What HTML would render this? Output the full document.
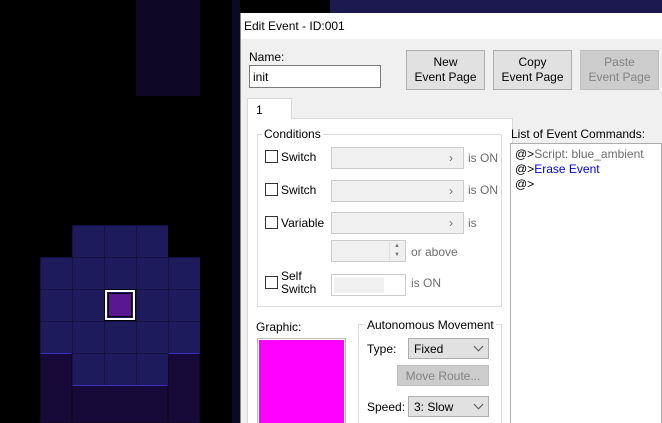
<!DOCTYPE html><html><head><style>
*{box-sizing:border-box;margin:0;padding:0}
html,body{width:662px;height:423px;overflow:hidden}
body{background:#000;position:relative;font-family:"Liberation Sans",sans-serif;font-size:12px;color:#000}
.a{position:absolute}
.t{background:#1e1b5c;background-image:linear-gradient(#15123f 1px,transparent 1px),linear-gradient(90deg,#15123f 1px,transparent 1px);background-size:32px 32px}
.d{background:#170a38;border:1px solid #110828}
.btn{position:absolute;background:#e1e1e1;border:1px solid #adadad;text-align:center;line-height:15px;padding-top:4px}
.cb{position:absolute;width:13px;height:13px;border:1px solid #333;background:#fff}
.combo{position:absolute;background:#f0f0f0;border:1px solid #ccc}
.g{color:#6d6d6d}
.sel{position:absolute;background:#e1e1e1;border:1px solid #adadad;padding:3px 0 0 5px}
.chev{position:absolute;right:6px;top:4px;width:7px;height:7px;border-right:1px solid #555;border-bottom:1px solid #555;transform:rotate(45deg)}
</style></head><body>
<div class="a d" style="left:136px;top:0;width:64px;height:96px;background:#0e0826"></div>
<div class="a t" style="left:72px;top:225px;width:96px;height:32px"></div>
<div class="a t" style="left:40px;top:257px;width:160px;height:96px"></div>
<div class="a t" style="left:72px;top:353px;width:96px;height:32px"></div>
<div class="a d" style="left:40px;top:353px;width:32px;height:70px;border-top:1px solid #3a30c0"></div>
<div class="a d" style="left:168px;top:353px;width:32px;height:70px;border-top:1px solid #3a30c0"></div>
<div class="a d" style="left:72px;top:385px;width:96px;height:38px;border-top:1px solid #3a30c0"></div>
<div class="a" style="left:105px;top:290px;width:30px;height:30px;border:2px solid #fff;outline:1px solid #000"><div style="margin:1px;height:24px;border:1px solid #000;background:#5a1890"></div></div>
<div class="a" style="left:330px;top:0;width:332px;height:13px;background:#1c1850"></div>
<div class="a" style="left:232px;top:0;width:8px;height:423px;background:#0c0a22"></div>
<div class="a" style="left:240px;top:13px;width:422px;height:410px;background:#f0f0f0;border-left:1px solid #888">
<div style="height:26px;background:#fff;padding:6px 0 0 3px;font-size:12px">Edit Event - ID:001</div>
</div>
<div class="a" style="left:249px;top:50px">Name:</div>
<div class="a" style="left:249px;top:65px;width:132px;height:23px;border:1px solid #7a7a7a;background:#fff;padding:4px 3px">init</div>
<div class="btn" style="left:406px;top:50px;width:79px;height:40px">New<br>Event Page</div>
<div class="btn" style="left:493px;top:50px;width:79px;height:40px">Copy<br>Event Page</div>
<div class="btn" style="left:580px;top:50px;width:79px;height:40px;background:#ccc;border-color:#bfbfbf;color:#838383">Paste<br>Event Page</div>
<div class="a" style="left:247px;top:118px;width:266px;height:305px;background:#fff;border:1px solid #d9d9d9;border-bottom:none"></div>
<div class="a" style="left:247px;top:98px;width:45px;height:21px;background:#fff;border:1px solid #d9d9d9;border-bottom:none;padding:4px 8px">1</div>
<div class="a" style="left:257px;top:134px;width:245px;height:173px;border:1px solid #dcdcdc"></div>
<div class="a" style="left:262px;top:127px;background:#fff;padding:0 2px">Conditions</div>
<div class="cb" style="left:265px;top:150px"></div><div class="a" style="left:281px;top:150px">Switch</div>
<div class="combo" style="left:331px;top:147px;width:133px;height:22px"></div><div class="a g" style="left:449px;top:151px">›</div><div class="a g" style="left:468px;top:151px">is ON</div>
<div class="cb" style="left:265px;top:183px"></div><div class="a" style="left:281px;top:183px">Switch</div>
<div class="combo" style="left:331px;top:180px;width:133px;height:22px"></div><div class="a g" style="left:449px;top:184px">›</div><div class="a g" style="left:468px;top:183px">is ON</div>
<div class="cb" style="left:265px;top:216px"></div><div class="a" style="left:281px;top:216px">Variable</div>
<div class="combo" style="left:331px;top:212px;width:133px;height:22px"></div><div class="a g" style="left:449px;top:216px">›</div><div class="a g" style="left:468px;top:216px">is</div>
<div class="combo" style="left:331px;top:240px;width:75px;height:22px"><div style="position:absolute;right:1px;top:1px;width:15px;height:18px;border-left:1px solid #ddd;font-size:6px;line-height:9px;text-align:center;color:#777">▲<br>▼</div></div><div class="a g" style="left:411px;top:245px">or above</div>
<div class="cb" style="left:265px;top:276px"></div><div class="a" style="left:281px;top:270px;line-height:13px">Self<br>Switch</div>
<div class="combo" style="left:331px;top:274px;width:75px;height:22px;background:#fff"><div style="margin:2px;width:50px;height:16px;background:#f0f0f0"></div></div><div class="a g" style="left:411px;top:276px">is ON</div>
<div class="a" style="left:256px;top:320px">Graphic:</div>
<div class="a" style="left:257px;top:338px;width:89px;height:85px;border:1px solid #bbb;border-bottom:none;padding:1px 1px 0"><div style="background:#f0f;height:100%"></div></div>
<div class="a" style="left:358px;top:324px;width:144px;height:99px;border:1px solid #dcdcdc;border-bottom:none"></div>
<div class="a" style="left:365px;top:318px;background:#fff;padding:0 2px">Autonomous Movement</div>
<div class="a" style="left:367px;top:342px">Type:</div>
<div class="sel" style="left:408px;top:338px;width:81px;height:21px">Fixed<div class="chev"></div></div>
<div class="btn" style="left:397px;top:365px;width:92px;height:21px;background:#ccc;border-color:#bfbfbf;color:#838383;padding-top:3px">Move Route...</div>
<div class="a" style="left:367px;top:400px">Speed:</div>
<div class="sel" style="left:408px;top:396px;width:81px;height:21px">3: Slow<div class="chev"></div></div>
<div class="a" style="left:511px;top:127px">List of Event Commands:</div>
<div class="a" style="left:510px;top:143px;width:152px;height:280px;background:#fff;border:1px solid #adadad;border-bottom:none;padding:3px 4px;line-height:15px">
<div>@&gt;<span class="g">Script: blue_ambient</span></div>
<div>@&gt;<span style="color:#0000e0">Erase Event</span></div>
<div>@&gt;</div></div>
</body></html>
